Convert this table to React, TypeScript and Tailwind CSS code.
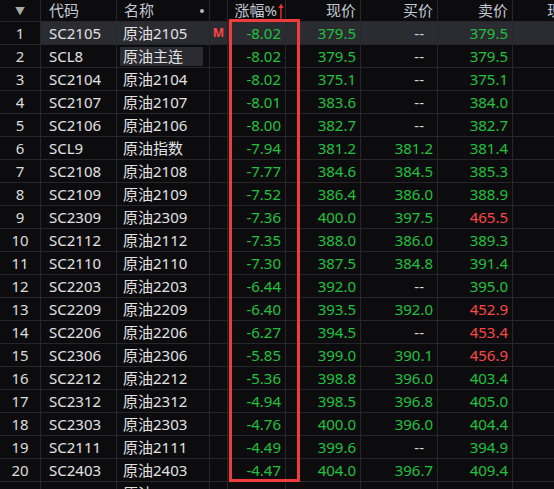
import React from 'react';

type Row = {
  no: number;
  code: string;
  name: string;
  pct: string;
  last: string;
  bid: string;
  ask: string;
  askUp?: boolean;
};

const rows: Row[] = [
  { no: 1, code: 'SC2105', name: '原油2105', pct: '-8.02', last: '379.5', bid: '--', ask: '379.5' },
  { no: 2, code: 'SCL8', name: '原油主连', pct: '-8.02', last: '379.5', bid: '--', ask: '379.5' },
  { no: 3, code: 'SC2104', name: '原油2104', pct: '-8.02', last: '375.1', bid: '--', ask: '375.1' },
  { no: 4, code: 'SC2107', name: '原油2107', pct: '-8.01', last: '383.6', bid: '--', ask: '384.0' },
  { no: 5, code: 'SC2106', name: '原油2106', pct: '-8.00', last: '382.7', bid: '--', ask: '382.7' },
  { no: 6, code: 'SCL9', name: '原油指数', pct: '-7.94', last: '381.2', bid: '381.2', ask: '381.4' },
  { no: 7, code: 'SC2108', name: '原油2108', pct: '-7.77', last: '384.6', bid: '384.5', ask: '385.3' },
  { no: 8, code: 'SC2109', name: '原油2109', pct: '-7.52', last: '386.4', bid: '386.0', ask: '388.9' },
  { no: 9, code: 'SC2309', name: '原油2309', pct: '-7.36', last: '400.0', bid: '397.5', ask: '465.5', askUp: true },
  { no: 10, code: 'SC2112', name: '原油2112', pct: '-7.35', last: '388.0', bid: '386.0', ask: '389.3' },
  { no: 11, code: 'SC2110', name: '原油2110', pct: '-7.30', last: '387.5', bid: '384.8', ask: '391.4' },
  { no: 12, code: 'SC2203', name: '原油2203', pct: '-6.44', last: '392.0', bid: '--', ask: '395.0' },
  { no: 13, code: 'SC2209', name: '原油2209', pct: '-6.40', last: '393.5', bid: '392.0', ask: '452.9', askUp: true },
  { no: 14, code: 'SC2206', name: '原油2206', pct: '-6.27', last: '394.5', bid: '--', ask: '453.4', askUp: true },
  { no: 15, code: 'SC2306', name: '原油2306', pct: '-5.85', last: '399.0', bid: '390.1', ask: '456.9', askUp: true },
  { no: 16, code: 'SC2212', name: '原油2212', pct: '-5.36', last: '398.8', bid: '396.0', ask: '403.4' },
  { no: 17, code: 'SC2312', name: '原油2312', pct: '-4.94', last: '398.5', bid: '396.8', ask: '405.0' },
  { no: 18, code: 'SC2303', name: '原油2303', pct: '-4.76', last: '400.0', bid: '396.0', ask: '404.4' },
  { no: 19, code: 'SC2111', name: '原油2111', pct: '-4.49', last: '399.6', bid: '--', ask: '394.9' },
  { no: 20, code: 'SC2403', name: '原油2403', pct: '-4.47', last: '404.0', bid: '396.7', ask: '409.4' },
  { no: 21, code: 'SC2301', name: '原油2301', pct: '-4.40', last: '401.2', bid: '--', ask: '405.1' },
];

const cols = 'grid grid-cols-[41px_76px_93px_18px_58px_75px_77px_75px_80px]';
const cell = 'border-r border-[#26262b] flex items-center overflow-hidden whitespace-nowrap';

const priceClass = (v: string, up?: boolean) =>
  v === '--' ? 'text-[#d6d6d6] mr-[9px]' : up ? 'text-[#ff4646]' : 'text-[#1fc23c]';

export default function App() {
  return (
    <div
      className="relative w-[554px] h-[489px] overflow-hidden bg-[#0c0c0e] text-[15px]"
      style={{ fontFamily: '"Noto Sans", "Noto Sans CJK SC", sans-serif' }}
    >
      <div className="w-[640px]">
        {/* header */}
        <div className={`${cols} h-[22px] border-b border-[#26262b] text-[#c3c9d2] leading-none`}>
          <div className={`${cell} justify-center text-[10px] text-[#a8a8a8]`}>▼</div>
          <div className={`${cell} pl-[8px]`}>代码</div>
          <div className={`${cell} pl-[7px] justify-between pr-[5px]`}>
            <span>名称</span>
            <span className="w-[4px] h-[4px] rounded-full bg-[#b8b8b8]" />
          </div>
          <div className={cell} />
          <div className={`${cell} justify-end pr-[1px]`}>
            <span>涨幅%</span>
            <svg width="6" height="16" viewBox="0 0 6 16" className="ml-[1px]">
              <path d="M3 3 L3 16" stroke="#ff3030" strokeWidth="1.3" />
              <path d="M0.5 5 L3 0.5 L5.5 5 Z" fill="#ff3030" />
            </svg>
          </div>
          <div className={`${cell} justify-end pr-[4px]`}>现价</div>
          <div className={`${cell} justify-end pr-[4px]`}>买价</div>
          <div className={`${cell} justify-end pr-[4px]`}>卖价</div>
          <div className={`${cell} pl-[34px]`}>现价</div>
        </div>

        {rows.map((r) => {
          const selected = r.no === 1;
          const sel = selected ? 'bg-[#2b2b32]' : '';
          return (
            <div
              key={r.no}
              className={`${cols} h-[23px] border-b border-[#26262b] leading-none`}
            >
              <div className={`${cell} justify-center text-[#dcdcdc]`}>{r.no}</div>
              <div className={`${cell} pl-[8px] text-[#e2e2e2] ${sel}`}>{r.code}</div>
              <div className={`${cell} text-[#e2e2e2] ${selected ? 'bg-[#2b2b32] pl-[6px]' : ''}`}>
                {r.no === 2 ? (
                  <div className="ml-[3px] w-[83px] h-[19px] bg-[#2b2b32] flex items-center pl-[3px]">{r.name}</div>
                ) : (
                  <span className={selected ? '' : 'pl-[6px]'}>{r.name}</span>
                )}
              </div>
              <div className={`${cell} justify-center ${sel}`}>
                {selected && <span className="text-[12px] font-bold text-[#ff4646]">M</span>}
              </div>
              <div className={`${cell} justify-end pr-[4px] text-[#1fc23c] ${sel}`}>{r.pct}</div>
              <div className={`${cell} justify-end pr-[4px] ${sel}`}>
                <span className={priceClass(r.last)}>{r.last}</span>
              </div>
              <div className={`${cell} justify-end pr-[4px] ${sel}`}>
                <span className={priceClass(r.bid)}>{r.bid}</span>
              </div>
              <div className={`${cell} justify-end pr-[4px] ${sel}`}>
                <span className={priceClass(r.ask, r.askUp)}>{r.ask}</span>
              </div>
              <div className={`${cell} ${sel}`} />
            </div>
          );
        })}
      </div>

      {/* red highlight frame around 涨幅% column */}
      <div className="absolute left-[229px] top-[19px] w-[71px] h-[463px] border-[3px] border-[#f03c3c] pointer-events-none" />
    </div>
  );
}
